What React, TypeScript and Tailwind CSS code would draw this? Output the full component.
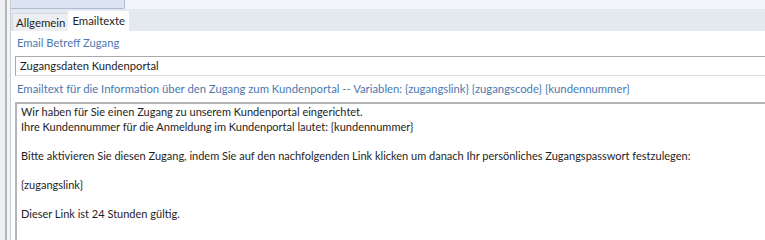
export default function App() {
  const font = { fontFamily: 'Lato, "Noto Sans", sans-serif' };
  return (
    <div className="w-[765px] h-[240px] overflow-hidden flex bg-white text-[11.2px] whitespace-nowrap" style={font}>
      {/* left strip */}
      <div className="w-[10px] shrink-0 flex bg-[#f0f0f0]">
        <div className="w-[5px] bg-[#eef0f3]" />
        <div className="w-[2px] bg-[#b4b8be]" />
        <div className="w-[3px] bg-[#f4f4f4]" />
      </div>
      <div className="flex-1 flex flex-col border-l border-[#c8cdd4] min-w-0">
        {/* top bar */}
        <div className="h-[9px] flex bg-[#f2f5f9]">
          <div className="w-[114px] bg-[#dbe5f1] border-r border-b border-[#aebbd0] rounded-br-[2px]" />
        </div>
        {/* tab strip */}
        <div className="h-[22px] flex items-end bg-[#e4e9f0] pl-[1px]">
          <div className="h-[18px] px-[3px] flex items-center bg-[#eceef1] border-t border-l border-[#d6dae0] text-[#1e1e1e] text-[11.4px]">
            Allgemein
          </div>
          <div className="h-[20px] px-[4px] flex items-center bg-white text-[#1e1e1e] text-[11.4px]">
            Emailtexte
          </div>
        </div>
        {/* content */}
        <div className="flex-1 flex flex-col pl-[4px] min-w-0">
          <div className="h-[25px] pl-[2px] flex items-center text-[#4a78b0]">Email Betreff Zugang</div>
          <div className="h-[20px] border-t border-l border-[#a9a9a9] border-b border-b-[#dcdcdc] flex items-center pl-[4px] text-[#1e1e1e]">
            Zugangsdaten Kundenportal
          </div>
          <div className="h-[26px] pl-[2px] pt-[1px] flex items-center text-[#4a78b0] text-[11.3px]">
            Emailtext für die Information über den Zugang zum Kundenportal -- Variablen: {'{zugangslink}'} {'{zugangscode}'} {'{kundennummer}'}
          </div>
          <div className="flex-1 border-t-2 border-l-2 border-[#b4b4b4] pl-[4px] pt-[1px] text-[#1e1e1e] text-[11px] leading-[14.5px]">
            <div>Wir haben für Sie einen Zugang zu unserem Kundenportal eingerichtet.</div>
            <div>Ihre Kundennummer für die Anmeldung im Kundenportal lautet: {'{kundennummer}'}</div>
            <div>&nbsp;</div>
            <div>Bitte aktivieren Sie diesen Zugang, indem Sie auf den nachfolgenden Link klicken um danach Ihr persönliches Zugangspasswort festzulegen:</div>
            <div>&nbsp;</div>
            <div>{'{zugangslink}'}</div>
            <div>&nbsp;</div>
            <div>Dieser Link ist 24 Stunden gültig.</div>
          </div>
        </div>
      </div>
    </div>
  );
}
